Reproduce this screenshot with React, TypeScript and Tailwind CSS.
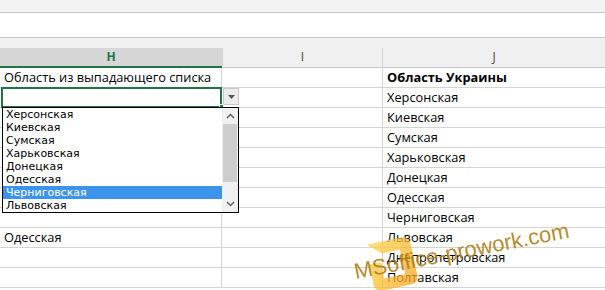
import React from "react";

const jCol = [
  "Херсонская",
  "Киевская",
  "Сумская",
  "Харьковская",
  "Донецкая",
  "Одесская",
  "Черниговская",
  "Львовская",
  "Днепропетровская",
  "Полтавская",
];

const listItems = [
  "Херсонская",
  "Киевская",
  "Сумская",
  "Харьковская",
  "Донецкая",
  "Одесская",
  "Черниговская",
  "Львовская",
];

function Row({ h, j, bold }: { h?: string; j?: string; bold?: boolean }) {
  return (
    <div className="flex h-[20px] border-b border-[#d4d4d4]">
      <div className="w-[222px] shrink-0 border-r border-[#d4d4d4] pl-[4px] leading-[19px] whitespace-nowrap">
        {h}
      </div>
      <div className="w-[161px] shrink-0 border-r border-[#d4d4d4]" />
      <div className={"flex-1 pl-[4px] leading-[19px] whitespace-nowrap " + (bold ? "font-bold" : "")}>{j}</div>
    </div>
  );
}

export default function App() {
  const rows: { h?: string; j?: string; bold?: boolean }[] = [
    { h: "Область из выпадающего списка", j: "Область Украины", bold: true },
  ];
  for (let i = 0; i < 10; i++) {
    rows.push({ j: jCol[i], h: i === 7 ? "Одесская" : undefined });
  }
  return (
    <div
      className="relative w-[605px] h-[290px] overflow-hidden bg-white text-[12.8px] text-black"
      style={{ fontFamily: '"Open Sans", "Noto Sans", sans-serif' }}
    >
      <div className="h-[13px] bg-[#f3f3f3] border-b border-[#c6c6c6]" />
      <div className="h-[25px] bg-white border-b border-[#c6c6c6]" />
      <div className="h-[10px] bg-[#f0f0f0]" />
      <div className="flex h-[20px] bg-[#f0f0f0] text-[12px]">
        <div className="w-[222px] shrink-0 bg-[#d6d6d6] border-b-2 border-[#217346] text-center font-bold text-[#217346] leading-[18px]">
          H
        </div>
        <div className="w-[161px] shrink-0 border-l border-[#d4d4d4] border-r text-center text-[#444] leading-[18px] border-b border-b-[#c6c6c6]">
          I
        </div>
        <div className="flex-1 text-center text-[#444] leading-[18px] border-b border-[#c6c6c6]">J</div>
      </div>
      {rows.map((r, i) => (
        <Row key={i} h={r.h} j={r.j} bold={r.bold} />
      ))}

      {/* selected cell border */}
      <div className="absolute left-[1px] top-[87px] w-[221px] h-[21px] border-2 border-[#217346]" />
      <div className="absolute left-[219px] top-[104px] w-[5px] h-[5px] bg-[#217346] border border-white" />
      {/* dropdown button */}
      <div className="absolute left-[223px] top-[88px] w-[16px] h-[17px] bg-[#ececec] border border-[#c8c8c8] flex items-center justify-center">
        <svg width="7" height="4" viewBox="0 0 7 4">
          <path d="M0 0 L7 0 L3.5 4 Z" fill="#555" />
        </svg>
      </div>

      {/* dropdown list */}
      <div
        className="absolute left-[2px] top-[107px] w-[237px] h-[106px] bg-white border border-black flex text-[11px]"
        style={{ fontFamily: '"DejaVu Sans", "Liberation Sans", sans-serif' }}
      >
        <div className="flex-1 flex flex-col">
          {listItems.map((t) => (
            <div
              key={t}
              className={
                "h-[13px] leading-[13px] pl-[3px] whitespace-nowrap " +
                (t === "Черниговская" ? "bg-[#3c94ea] text-white" : "")
              }
            >
              {t}
            </div>
          ))}
        </div>
        <div className="w-[16px] bg-[#f0f0f0] flex flex-col items-center">
          <div className="h-[16px] flex items-center justify-center">
            <svg width="9" height="6" viewBox="0 0 9 6">
              <path d="M1 5 L4.5 1.5 L8 5" stroke="#606060" strokeWidth="1.5" fill="none" />
            </svg>
          </div>
          <div className="w-[14px] h-[58px] bg-[#cdcdcd]" />
          <div className="flex-1" />
          <div className="h-[16px] flex items-center justify-center">
            <svg width="9" height="6" viewBox="0 0 9 6">
              <path d="M1 1 L4.5 4.5 L8 1" stroke="#606060" strokeWidth="1.5" fill="none" />
            </svg>
          </div>
        </div>
      </div>

      {/* watermark */}
      <div className="absolute left-[345px] top-[205px] w-[250px] h-[90px] pointer-events-none">
        <svg
          className="absolute left-[18px] top-[30px] opacity-75"
          width="58"
          height="58"
          viewBox="0 0 70 70"
          style={{ transform: "rotate(-12deg)" }}
        >
          <defs>
            <linearGradient id="lg" x1="0" y1="0" x2="1" y2="1">
              <stop offset="0" stopColor="#ffd84a" />
              <stop offset="1" stopColor="#f7a21a" />
            </linearGradient>
          </defs>
          <path
            d="M10 6 H52 Q62 6 62 16 V54 Q62 64 52 64 H18 Q8 64 8 54 V30 L22 30 V50 H48 V20 H26 L10 6 Z"
            fill="url(#lg)"
          />
        </svg>
        <div
          className="absolute left-[12px] top-[54px] text-[22px] leading-[26px] whitespace-nowrap text-[#ad8117] opacity-90"
          style={{ fontFamily: '"Liberation Sans", Arial, sans-serif', transform: "rotate(-11deg)", transformOrigin: "left bottom" }}
        >
          MSoffice-prowork.com
        </div>
      </div>
    </div>
  );
}
